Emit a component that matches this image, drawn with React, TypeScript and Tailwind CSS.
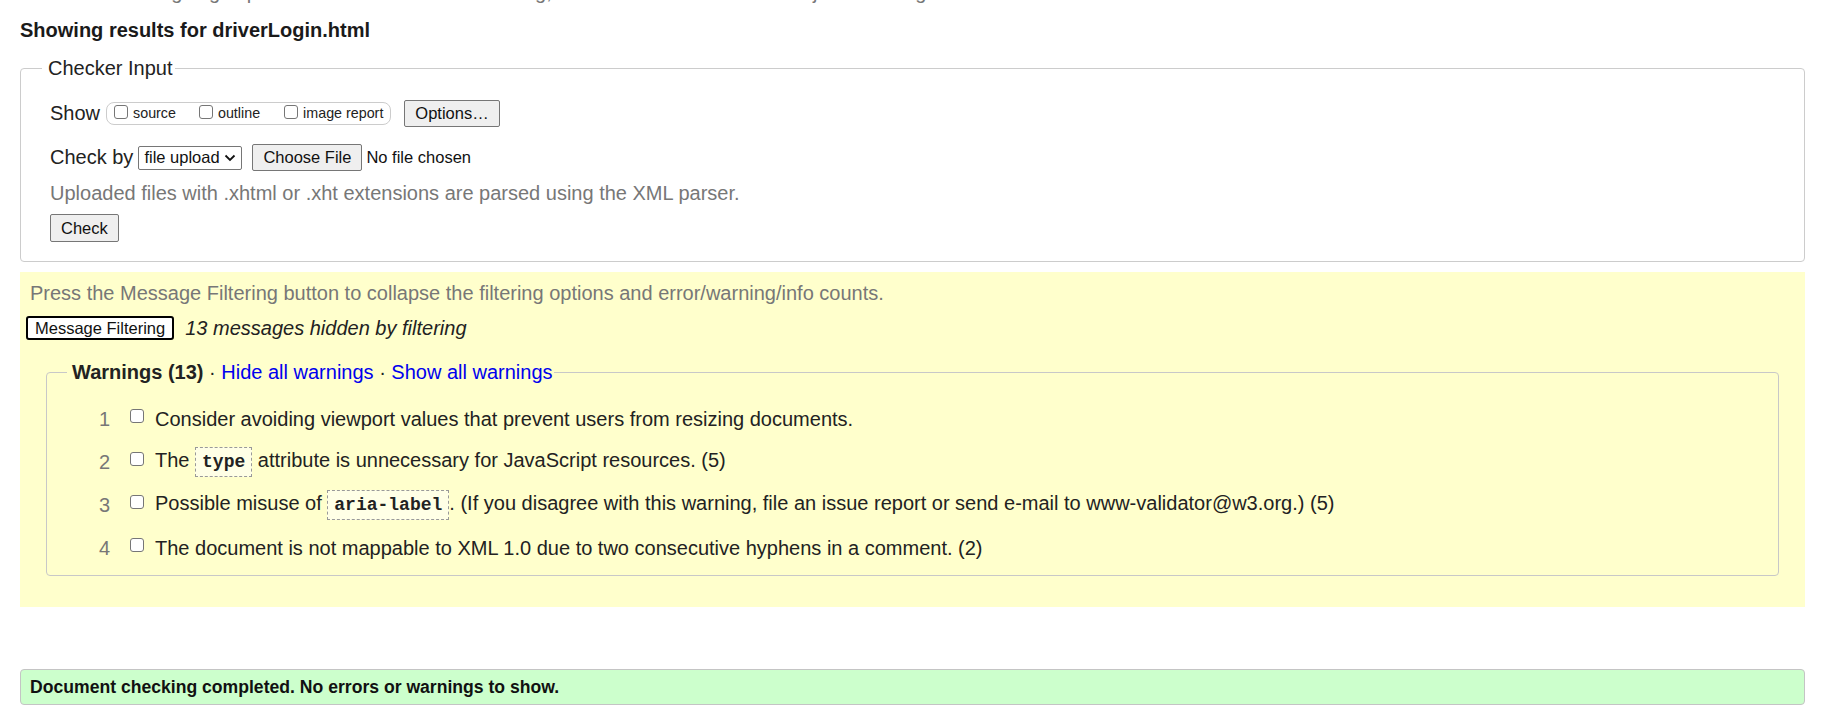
import React from 'react';

const Box: React.FC<{ className?: string }> = ({ className = '' }) => (
  <span className={`inline-block w-[14px] h-[14px] shrink-0 rounded-[3px] border border-[#767676] bg-white ${className}`} />
);

const Code: React.FC<{ children: React.ReactNode }> = ({ children }) => (
  <code className="inline-block px-[6px] border border-dashed border-[#999] bg-[#ffffe6] font-['Liberation_Mono',monospace] font-bold text-[18px] leading-[28px] align-middle">
    {children}
  </code>
);

const warnings: React.ReactNode[] = [
  <>Consider avoiding viewport values that prevent users from resizing documents.</>,
  <>The <Code>type</Code> attribute is unnecessary for JavaScript resources. (5)</>,
  <>
    Possible misuse of <Code>aria-label</Code>. (If you disagree with this warning, file an issue report or send
    e-mail to www-validator@w3.org.) (5)
  </>,
  <>The document is not mappable to XML 1.0 due to two consecutive hyphens in a comment. (2)</>,
];

const btn =
  'h-[27px] px-[10px] whitespace-nowrap border border-[#767676] rounded-[2px] bg-[#efefef] text-[16.5px] text-[#111] leading-none';

export default function App() {
  return (
    <div className="min-h-screen overflow-hidden bg-white pl-[20px] pr-[23px] text-[20px] leading-[23px] text-[#222] font-['Liberation_Sans',Arial,sans-serif]">
      {/* intro line, scrolled mostly out of view */}
      <p className="mt-[-19px] text-[#777] whitespace-nowrap">
        This tool is an ongoing experiment in better HTML checking, and its behavior remains subject to change
      </p>

      <h2 className="mt-[15px] font-bold text-[#1a1a1a]">Showing results for driverLogin.html</h2>

      {/* Checker Input */}
      <fieldset className="mt-[15px] border border-[#ccc] rounded-[4px] pl-[29px] pb-[19px]">
        <legend className="ml-[-8px] pl-[6px] pr-[2px]">Checker Input</legend>

        <div className="mt-[20px] flex h-[27px] items-center">
          <span>Show</span>
          <div className="ml-[6px] flex h-[23px] items-center rounded-[8px] border border-[#ccc] pl-[7px] pr-[7px] text-[14.3px]">
            <label className="flex items-center mr-[23px]">
              <Box className="mb-[4px]" />
              <span className="ml-[5px]">source</span>
            </label>
            <label className="flex items-center mr-[24px]">
              <Box className="mb-[4px]" />
              <span className="ml-[5px]">outline</span>
            </label>
            <label className="flex items-center">
              <Box className="mb-[4px]" />
              <span className="ml-[5px]">image report</span>
            </label>
          </div>
          <button className={`ml-[13px] ${btn}`}>Options…</button>
        </div>

        <div className="mt-[17px] flex h-[27px] items-center">
          <span>Check by</span>
          <div className="ml-[5px] flex h-[24px] w-[104px] items-center justify-between rounded-[2px] border border-[#767676] bg-white pl-[5px] pr-[5px] text-[16.5px] text-[#111]">
            <span className="whitespace-nowrap">file upload</span>
            <svg width="12" height="8" viewBox="0 0 12 8" fill="none">
              <path d="M1.5 1.5l4.5 4.5 4.5-4.5" stroke="#111" strokeWidth="1.8" />
            </svg>
          </div>
          <button className={`ml-[10px] ${btn}`}>Choose File</button>
          <span className="ml-[4px] whitespace-nowrap text-[16.5px] text-[#111]">No file chosen</span>
        </div>

        <p className="mt-[11px] text-[#777]">Uploaded files with .xhtml or .xht extensions are parsed using the XML parser.</p>

        <button className={`mt-[9px] h-[28px] ${btn}`}>Check</button>
      </fieldset>

      {/* Message filtering */}
      <div className="mt-[10px] bg-[#ffffcc] px-[10px] pt-[10px] pb-[31px]">
        <p className="text-[#777]">
          Press the Message Filtering button to collapse the filtering options and error/warning/info counts.
        </p>

        <div className="mt-[11px] flex h-[24px] items-center">
          <button className="ml-[-4px] h-[24px] whitespace-nowrap rounded-[3px] border-2 border-black bg-white px-[7px] text-[16.5px] leading-none text-[#111]">
            Message Filtering
          </button>
          <span className="ml-[11px] italic">13 messages hidden by filtering</span>
        </div>

        <fieldset className="mt-[21px] ml-[16px] mr-[16px] border border-[#c8c8c8] rounded-[4px] pl-[20px] pb-[12px]">
          <legend className="pl-[5px] pr-[1px]">
            <span className="font-bold">Warnings (13)</span> · <a className="text-[#0000ee]">Hide all warnings</a> ·{' '}
            <a className="text-[#0000ee]">Show all warnings</a>
          </legend>

          <ol className="mt-[20px] flex flex-col gap-[13px]">
            {warnings.map((w, i) => (
              <li key={i} className="flex h-[30px] items-center">
                <span className="w-[43px] text-right text-[#777]">{i + 1}</span>
                <Box className="ml-[20px] mb-[7px]" />
                <span className="ml-[11px] whitespace-nowrap">{w}</span>
              </li>
            ))}
          </ol>
        </fieldset>
      </div>

      <div className="mt-[62px] flex h-[36px] items-center rounded-[4px] border border-[#c4c4c4] bg-[#ccffcc] pl-[9px] text-[17.6px] font-bold text-[#111]">
        Document checking completed. No errors or warnings to show.
      </div>
    </div>
  );
}
